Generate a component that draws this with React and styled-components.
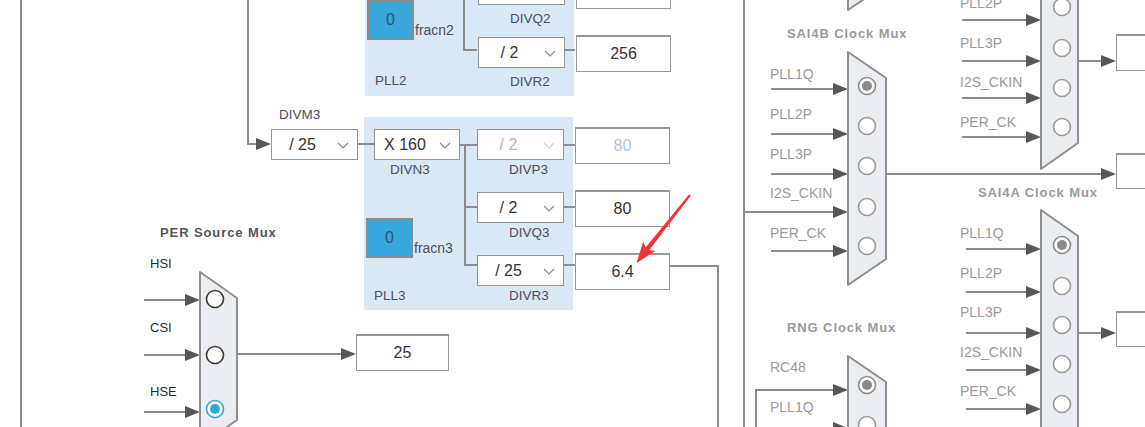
import React from "react";
import styled, { createGlobalStyle } from "styled-components";

const WIRE = "#8c8c8c";
const HEAD = "#575757";

const GlobalStyle = createGlobalStyle`
  body {
    margin: 0;
    background: #ffffff;
    font-family: "Liberation Sans", Arial, sans-serif;
  }
`;

// ---- data -------------------------------------------------------------

const pll3 = {
  x: 364,
  y: 117,
  h: 193,
  name: "PLL3",
  frac: "fracn3",
  main: { text: "X 160", label: "DIVN3" },
  nameGap: 30,
  labelGap: 2,
  stages: [
    { text: "/ 2", label: "DIVP3", out: "80", disabled: true },
    { text: "/ 2", label: "DIVQ3", out: "80" },
    { text: "/ 25", label: "DIVR3", out: "6.4" },
  ],
};

// upper part of PLL2 lies above the visible area
const pll2 = {
  x: 365,
  y: -101,
  h: 197,
  name: "PLL2",
  frac: "fracn2",
  nameGap: 33,
  labelGap: 6,
  stages: [
    { text: "", label: "", out: "" },
    { text: "", label: "DIVQ2", out: "" },
    { text: "/ 2", label: "DIVR2", out: "256" },
  ],
};

const sideBoxes = [
  { x: 356, y: 334, w: 93, h: 37, text: "25" },
  { x: 1116, y: 34, w: 95, h: 37, text: "" },
  { x: 1116, y: 153, w: 95, h: 36, text: "" },
  { x: 1116, y: 311, w: 95, h: 36, text: "" },
];

const titles = [
  { x: 160, y: 233, text: "PER Source Mux" },
  { x: 787, y: 34, text: "SAI4B Clock Mux", muted: true },
  { x: 978, y: 193, text: "SAI4A Clock Mux", muted: true },
  { x: 787, y: 328, text: "RNG Clock Mux", muted: true },
];

const inputGroups = [
  { x: 150, y: 256, gap: 48, dark: true, items: ["HSI", "CSI", "HSE"] },
  { x: 770, y: 66, gap: 23.75, items: ["PLL1Q", "PLL2P", "PLL3P", "I2S_CKIN", "PER_CK"] },
  { x: 960, y: -5, gap: 23.7, items: ["PLL2P", "PLL3P", "I2S_CKIN", "PER_CK"] },
  { x: 960, y: 225, gap: 23.5, items: ["PLL1Q", "PLL2P", "PLL3P", "I2S_CKIN", "PER_CK"] },
  { x: 770, y: 359, gap: 24, items: ["RC48", "PLL1Q"] },
];

const wires = [
  { pts: [[21, 0], [21, 427]] },
  { pts: [[744, 0], [744, 427]] },
  { pts: [[248, 0], [248, 144], [271, 144]], arrow: true },
  { pts: [[358, 144], [374, 144]] },
  { pts: [[460, 145], [477, 145]] },
  { pts: [[465, 145], [465, 265], [477, 265]] },
  { pts: [[465, 207], [477, 207]] },
  { pts: [[564, 145], [575, 145]] },
  { pts: [[564, 207], [575, 207]] },
  { pts: [[564, 265], [575, 265]] },
  { pts: [[464, -5], [464, 50], [477, 50]] },
  { pts: [[564, 50], [575, 50]] },
  { pts: [[670, 266], [718, 266], [718, 427]] },
  // PER source mux
  { pts: [[144, 300], [200, 300]], arrow: true },
  { pts: [[144, 355], [200, 355]], arrow: true },
  { pts: [[144, 412], [200, 412]], arrow: true },
  { pts: [[237, 354], [356, 354]], arrow: true },
  // SAI4B
  { pts: [[771, 89], [848, 89]], arrow: true },
  { pts: [[771, 134], [848, 134]], arrow: true },
  { pts: [[771, 174], [848, 174]], arrow: true },
  { pts: [[744, 212], [848, 212]], arrow: true },
  { pts: [[771, 251], [848, 251]], arrow: true },
  { pts: [[886, 174], [1116, 174]], arrow: true },
  // top right mux
  { pts: [[962, 20], [1041, 20]], arrow: true },
  { pts: [[962, 61], [1041, 61]], arrow: true },
  { pts: [[962, 98], [1041, 98]], arrow: true },
  { pts: [[962, 137], [1041, 137]], arrow: true },
  { pts: [[1078, 61], [1116, 61]], arrow: true },
  // SAI4A
  { pts: [[966, 249], [1041, 249]], arrow: true },
  { pts: [[966, 292], [1041, 292]], arrow: true },
  { pts: [[966, 333], [1041, 333]], arrow: true },
  { pts: [[966, 370], [1041, 370]], arrow: true },
  { pts: [[966, 409], [1041, 409]], arrow: true },
  { pts: [[1078, 333], [1116, 333]], arrow: true },
  // RNG
  { pts: [[756, 430], [756, 390], [848, 390]], arrow: true },
  { pts: [[771, 428], [848, 428]], arrow: true },
];

const muxes = [
  { x: 200, w: 37, top: 272, bottom: 420, cx: 215, cys: [299, 355, 409], sel: 2, live: true },
  { x: 848, w: 38, top: 52, bottom: 259, cx: 867, cys: [86, 126, 166, 207, 246], sel: 0 },
  { x: 848, w: 38, top: -120, bottom: -16, cx: 867, cys: [] },
  { x: 1041, w: 37, top: -90, bottom: 143, cx: 1062, cys: [-33, 7, 48, 88, 127], sel: -1 },
  { x: 1041, w: 37, top: 210, bottom: 460, cx: 1062, cys: [245, 286, 325, 364, 404], sel: 0 },
  { x: 848, w: 38, top: 356, bottom: 520, cx: 867, cys: [385, 425], sel: 0 },
];

// ---- drawing pieces ---------------------------------------------------

const Wire = ({ pts, arrow }) => {
  const p = pts.map((a) => [...a]);
  let head = null;
  if (arrow) {
    const [x, y] = p[p.length - 1];
    p[p.length - 1] = [x - 13, y];
    head = (
      <polygon
        points={`${x - 15},${y - 6} ${x},${y} ${x - 15},${y + 6}`}
        fill={HEAD}
      />
    );
  }
  return (
    <g>
      <polyline
        points={p.map((a) => a.join(",")).join(" ")}
        fill="none"
        stroke={WIRE}
        strokeWidth="2"
      />
      {head}
    </g>
  );
};

const MuxShape = ({ x, w, top, bottom, cx, cys, sel, live }) => {
  const slope = 26;
  const ring = live ? "#3a3a3a" : "#9a9a9a";
  const pick = live ? "#35a3d9" : "#8a8a8a";
  return (
    <g>
      <polygon
        points={`${x},${top} ${x + w},${top + slope} ${x + w},${bottom} ${x},${bottom + slope}`}
        fill="#eaeef2"
        stroke="#8e8e8e"
        strokeWidth="2"
        strokeLinejoin="round"
      />
      {cys.map((cy, i) => (
        <g key={i}>
          <circle
            cx={cx}
            cy={cy}
            r="8.5"
            fill="#ffffff"
            stroke={i === sel ? pick : ring}
            strokeWidth="1.6"
          />
          {i === sel && <circle cx={cx} cy={cy} r="5" fill={pick} />}
        </g>
      ))}
    </g>
  );
};

// red annotation arrow pointing at the 6.4 output
const PointerArrow = () => (
  <polygon
    points="689.2,194.3 645.6,247.6 643.2,241.6 636.5,263 655.4,251 649.4,250 690.8,195.7"
    fill="#ef3535"
  />
);

const Chevron = ({ disabled }) => (
  <ChevronIcon width="12" height="7" viewBox="0 0 12 7">
    <polyline
      points="1,1 6,6 11,1"
      fill="none"
      stroke={disabled ? "#cfcfcf" : "#8a8a8a"}
      strokeWidth="1.2"
    />
  </ChevronIcon>
);

const Dropdown = ({ text, w = 87, disabled }) => (
  <Select $w={w} $disabled={disabled}>
    <SelectText>{text}</SelectText>
    <Chevron disabled={disabled} />
  </Select>
);

const Pll = ({ x, y, h, name, frac, main, stages, nameGap, labelGap }) => (
  <PllPanel $x={x} $y={y} $h={h}>
    <PllLeft>
      {main ? (
        <Stage $gap={2}>
          <Dropdown text={main.text} w={86} />
          <StageLabel $indent={16}>{main.label}</StageLabel>
        </Stage>
      ) : (
        <StageSpacer />
      )}
      <FracRow>
        <FracBox>0</FracBox>
        <FracLabel>{frac}</FracLabel>
      </FracRow>
      <PllName $gap={nameGap}>{name}</PllName>
    </PllLeft>
    <PllRight $gap={63 - 47 - labelGap}>
      {stages.map((s, i) => (
        <StageRow key={i}>
          <Stage $gap={labelGap}>
            <Dropdown text={s.text} disabled={s.disabled} />
            <StageLabel $indent={32}>{s.label}</StageLabel>
          </Stage>
          <OutBox $w={95} $h={37} $lift={2} $disabled={s.disabled}>
            {s.out}
          </OutBox>
        </StageRow>
      ))}
    </PllRight>
  </PllPanel>
);

// ---- app --------------------------------------------------------------

export default function App() {
  return (
    <>
      <GlobalStyle />
      <Canvas>
        <Pll {...pll2} />
        <Pll {...pll3} />

        <Wires viewBox="0 0 1145 427">
          {wires.map((w, i) => (
            <Wire key={i} {...w} />
          ))}
          {muxes.map((m, i) => (
            <MuxShape key={i} {...m} />
          ))}
        </Wires>

        <Node $x={271} $y={107}>
          <Stage $gap={6}>
            <StageLabel $indent={8}>DIVM3</StageLabel>
            <Dropdown text="/ 25" />
          </Stage>
        </Node>

        {sideBoxes.map((b, i) => (
          <Node key={i} $x={b.x} $y={b.y}>
            <OutBox $w={b.w} $h={b.h}>
              {b.text}
            </OutBox>
          </Node>
        ))}

        {titles.map((t) => (
          <Node key={t.text} $x={t.x} $y={t.y - 8}>
            <MuxTitle $muted={t.muted}>{t.text}</MuxTitle>
          </Node>
        ))}

        {inputGroups.map((g, i) => (
          <Node key={i} $x={g.x} $y={g.y}>
            <InputList $gap={g.gap}>
              {g.items.map((t) => (
                <InputLabel key={t} $dark={g.dark}>
                  {t}
                </InputLabel>
              ))}
            </InputList>
          </Node>
        ))}

        <Overlay viewBox="0 0 1145 427">
          <PointerArrow />
        </Overlay>
      </Canvas>
    </>
  );
}

// ---- styles -----------------------------------------------------------

const Canvas = styled.div`
  position: relative;
  width: 1145px;
  height: 427px;
  overflow: hidden;
  background: #ffffff;
`;

const Node = styled.div`
  position: absolute;
  z-index: 2;
  left: ${(p) => p.$x}px;
  top: ${(p) => p.$y}px;
`;

const Wires = styled.svg`
  position: absolute;
  z-index: 1;
  inset: 0;
  width: 1145px;
  height: 427px;
`;

const Overlay = styled(Wires)`
  z-index: 3;
  pointer-events: none;
`;

/* the panel paints only its background below the wires; its columns
   are lifted above them */
const PllPanel = styled.div`
  position: absolute;
  left: ${(p) => p.$x}px;
  top: ${(p) => p.$y}px;
  width: 209px;
  height: ${(p) => p.$h}px;
  box-sizing: border-box;
  padding: 12px 0 0 10px;
  background: #dae7f4;
  display: grid;
  grid-template-columns: 103px auto;
  align-items: start;
`;

const PllLeft = styled.div`
  position: relative;
  z-index: 2;
  display: flex;
  flex-direction: column;
  align-items: flex-start;
`;

const PllRight = styled.div`
  position: relative;
  z-index: 2;
  display: flex;
  flex-direction: column;
  gap: ${(p) => p.$gap}px;
`;

const StageRow = styled.div`
  display: flex;
  align-items: flex-start;
  gap: 11px;
`;

const Stage = styled.div`
  display: flex;
  flex-direction: column;
  gap: ${(p) => p.$gap}px;
`;

const StageSpacer = styled.div`
  height: 49px;
`;

const StageLabel = styled.div`
  min-height: 16px;
  padding-left: ${(p) => p.$indent}px;
  line-height: 16px;
  font-size: 13.5px;
  color: #4e4e5c;
  white-space: nowrap;
`;

const PllName = styled(StageLabel)`
  margin-top: ${(p) => p.$gap}px;
  padding-left: 0;
`;

const FracRow = styled.div`
  display: flex;
  align-items: flex-end;
  gap: 1px;
  margin: 40px 0 0 -8px;
`;

const FracBox = styled.div`
  width: 47px;
  height: 40px;
  box-sizing: border-box;
  border: 2px solid #8c8c8c;
  background: #38a7db;
  color: #2c5470;
  font-size: 16px;
  display: flex;
  align-items: center;
  justify-content: center;
`;

const FracLabel = styled(StageLabel)`
  padding: 0 0 2px;
  font-size: 14px;
`;

const Select = styled.div`
  position: relative;
  width: ${(p) => p.$w}px;
  height: 31px;
  box-sizing: border-box;
  border: 1px solid #969696;
  background: #ffffff;
  display: flex;
  align-items: center;
  padding-right: 24px;
  color: ${(p) => (p.$disabled ? "#b4b4b4" : "#333333")};
  font-size: 16px;
`;

const SelectText = styled.span`
  flex: 1;
  text-align: center;
`;

const ChevronIcon = styled.svg`
  position: absolute;
  right: 8px;
  top: 12px;
`;

const OutBox = styled.div`
  width: ${(p) => p.$w}px;
  height: ${(p) => p.$h}px;
  margin-top: ${(p) => -(p.$lift || 0)}px;
  box-sizing: border-box;
  border: 1px solid #969696;
  border-top: 2px solid #969696;
  background: #ffffff;
  display: flex;
  align-items: center;
  justify-content: center;
  color: ${(p) => (p.$disabled ? "#a9c5df" : "#333333")};
  font-size: 16px;
  flex-shrink: 0;
`;

const MuxTitle = styled.div`
  line-height: 16px;
  font-size: 13px;
  font-weight: 700;
  letter-spacing: 0.9px;
  color: ${(p) => (p.$muted ? "#9a9a9a" : "#555555")};
  white-space: nowrap;
`;

const InputList = styled.div`
  display: flex;
  flex-direction: column;
  gap: ${(p) => p.$gap}px;
`;

const InputLabel = styled.div`
  line-height: 16px;
  font-size: ${(p) => (p.$dark ? "13px" : "14px")};
  color: ${(p) => (p.$dark ? "#1d2a3b" : "#9a9a9a")};
  white-space: nowrap;
`;
